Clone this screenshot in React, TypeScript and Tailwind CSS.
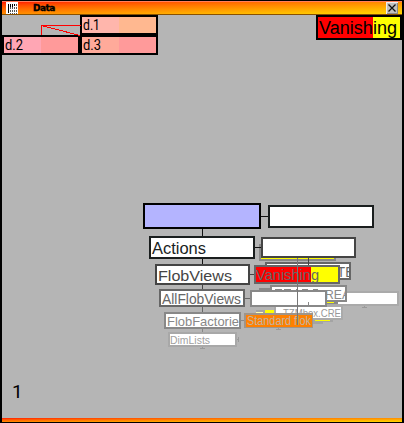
type LabelProps = {
  x: number;
  y: number;
  size: number;
  width?: number;
  color?: string;
  clip?: string;
  className?: string;
  children: string;
};

function Label({ x, y, size, width, color = "#000", clip, className, children }: LabelProps) {
  return (
    <g clipPath={clip}>
      <text
        x={x}
        y={y}
        fontSize={size}
        fill={color}
        textLength={width}
        lengthAdjust="spacingAndGlyphs"
        className={className}
      >
        {children}
      </text>
    </g>
  );
}

type BoxProps = { x: number; y: number; w: number; h: number; stroke: string; fill?: string };

function Box({ x, y, w, h, stroke, fill = "#fff" }: BoxProps) {
  return <rect x={x + 1} y={y + 1} width={w - 2} height={h - 2} fill={fill} stroke={stroke} strokeWidth={2} />;
}

function Diagram() {
  return (
    <svg width="400" height="403" viewBox="2 15 400 403" className="block shrink-0" shapeRendering="crispEdges">
      <defs>
        <clipPath id="layer2"><rect x={267} y={264} width={82} height={14} /></clipPath>
        <clipPath id="layer3"><rect x={273} y={287} width={73} height={13} /></clipPath>
        <clipPath id="factory"><rect x={166} y={314} width={73} height={13} /></clipPath>
      </defs>

      {/* data cells */}
      <Box x={80} y={15} w={78} h={20} stroke="#000" fill="#ffb6ac" />
      <rect x={119} y={17} width={37} height={16} fill="#ffb890" />
      <Box x={2} y={35} w={78} h={20} stroke="#000" fill="#ffa6b4" />
      <rect x={41} y={37} width={37} height={16} fill="#ff9a9a" />
      <Box x={80} y={35} w={78} h={20} stroke="#000" fill="#ffaa9a" />
      <rect x={119} y={37} width={37} height={16} fill="#ff9a9a" />
      <path d="M41 25H81V26H42V35H41Z" fill="#f00" />
      <path d="M41.5 25.5L80 35.5" fill="none" stroke="#f00" />
      <Label x={83} y={30} size={14} width={17} className="font-['Roboto',sans-serif]">d.1</Label>
      <Label x={5} y={50} size={14} width={18} className="font-['Roboto',sans-serif]">d.2</Label>
      <Label x={83} y={50} size={14} width={18} className="font-['Roboto',sans-serif]">d.3</Label>

      <Box x={316} y={15} w={86} h={25} stroke="#000" fill="#ff0" />
      <rect x={318} y={17} width={55} height={21} fill="#f00" />
      <Label x={319} y={34} size={18} width={78}>Vanishing</Label>

      {/* receding layers */}
      <Box x={259} y={244} w={77} h={17} stroke="#888" />
      <rect x={261} y={258} width={73} height={1} fill="#ff0" />
      <Box x={323} y={291} w={76} h={15} stroke="#aaa" />
      <path d="M364 306H365V307H367V308H362V307H364Z" fill="#999" />
      <path d="M256 310H275V320H256Z M312 320H333V322H323V324H312Z" fill="#a4a4a4" />
      <rect x={256} y={312} width={7} height={1} fill="#ffffb0" />
      <rect x={265} y={310} width={9} height={3} fill="#ff0" />
      <Box x={274} y={305} w={69} h={15} stroke="#aaa" />
      <Label x={283} y={317} size={11} width={58} color="#999">TZMbox.CRE</Label>
      <rect x={315} y={320} width={15} height={1} fill="#ff0" />
      <path d="M259 288H271V291H259Z M326 302H338V304H326Z" fill="#888" />
      <Box x={270} y={285} w={77} h={17} stroke="#888" />
      <path d="M275 289.5H282M284 289.5H291M296 289.5H298M302 289.5H308M313 289.5H318" stroke="#888" />
      <Label x={325} y={299} size={13} width={25} color="#888" clip="url(#layer3)">REA</Label>
      <rect x={327} y={302} width={7} height={1} fill="#ff0" />
      <Box x={265} y={262} w={86} h={18} stroke="#666" />
      <Label x={337} y={277} size={14} width={17} color="#666" clip="url(#layer2)">TE</Label>

      {/* connectors */}
      <path d="M202.5 229V236M261 216.5H268M202.5 259V264M255 247.5H261" stroke="#111" />
      <path d="M202.5 285V289M250 274.5H254M308.5 258V265" stroke="#444" />
      <path d="M202.5 307V312M245 298.5H250" stroke="#666" />
      <path d="M202.5 329V332M241 320.5H245" stroke="#888" />
      <path d="M202.5 347V349M200 348.5H205M237 339.5H239M238.5 337V342M278.5 328V330M276 329.5H281" stroke="#999" />

      {/* node tree */}
      <Box x={143} y={203} w={118} h={26} stroke="#000" fill="#b4b4ff" />
      <Box x={268} y={205} w={106} h={23} stroke="#1a1e1e" />
      <Box x={149} y={236} w={106} h={23} stroke="#1a1e1e" />
      <Label x={152} y={254} size={16} width={54} color="#1a1e1e">Actions</Label>
      <Box x={261} y={237} w={95} h={21} stroke="#444" />
      <Box x={155} y={264} w={95} h={21} stroke="#444" />
      <Label x={158} y={281} size={15.5} width={74} color="#444">FlobViews</Label>
      <Box x={254} y={265} w={86} h={19} stroke="#666" fill="#ff0" />
      <rect x={256} y={267} width={55} height={15} fill="#f00" />
      <Label x={256} y={280} size={14} width={63} color="#666">Vanishing</Label>
      <Box x={159} y={289} w={86} h={18} stroke="#666" />
      <Label x={162} y={304} size={14} width={79} color="#666">AllFlobViews</Label>
      <Box x={250} y={290} w={77} h={17} stroke="#888" />
      <rect x={308} y={302} width={1} height={3} fill="#888" />
      <Box x={164} y={312} w={77} h={17} stroke="#888" />
      <Label x={167} y={326} size={13} width={72} color="#888" clip="url(#factory)">FlobFactorie</Label>
      <Box x={244} y={313} w={69} h={15} stroke="#a09488" fill="#ff8000" />
      <rect x={246} y={315} width={66} height={12} fill="#ff8000" />
      <Label x={247} y={325} size={12} width={64} color="#c0b4a4">Standard flok</Label>
      <Box x={168} y={332} w={69} h={15} stroke="#a8a8a8" />
      <Label x={170} y={344} size={11} width={40} color="#a0a0a0">DimLists</Label>
      <path d="M297 258H298V325H297Z" fill="#777" />
      <Label x={12} y={398} size={19} className="font-['Roboto',sans-serif]">1</Label>
    </svg>
  );
}

function TitleIcon() {
  return (
    <svg className="ml-1 h-3 w-3 shrink-0" viewBox="0 0 12 12" shapeRendering="crispEdges">
      <path d="M0 0H12V12H0Z" fill="#fff" />
      <path d="M4.5 2V12M6.5 2V12M8.5 2V12M10.5 2V12" stroke="#555" strokeDasharray="2 1" />
      <path d="M2.5 2V11M4.5 2V5M6.5 2V5M8.5 2V4" stroke="#000" />
    </svg>
  );
}

function CloseIcon() {
  return (
    <svg className="mr-1 ml-auto h-3 w-3 shrink-0" viewBox="0 0 12 12">
      <path d="M0 0H12V12H0Z" fill="#c0c0c0" />
      <path d="M0 .5H12M.5 0V12" stroke="#eee" />
      <path d="M1 11.5H12M11.5 1V12" stroke="#888" />
      <path d="M2.5 2.5L9.5 9.5M9.5 2.5L2.5 9.5" stroke="#111" strokeWidth={1.3} />
    </svg>
  );
}

export default function App() {
  return (
    <main className="flex h-[423px] w-[404px] flex-col overflow-hidden border-x-2 border-y border-black bg-[#b5b5b5] font-['Liberation_Sans',Arial,sans-serif]">
      <header className="flex h-[14px] shrink-0 items-center border-t border-b border-t-[#ff8060] border-b-[#885000] bg-linear-to-br from-[#ff1000] to-[#ffd800]">
        <TitleIcon />
        <h1 className="ml-[15px] font-['DejaVu_Sans',sans-serif] text-[9px] leading-3 font-black tracking-[-0.5px] [-webkit-text-stroke:0.4px_black]">
          Data
        </h1>
        <CloseIcon />
      </header>
      <Diagram />
      <footer className="h-1 shrink-0 bg-linear-to-br from-[#ff0000] to-[#ffd800]" />
    </main>
  );
}
